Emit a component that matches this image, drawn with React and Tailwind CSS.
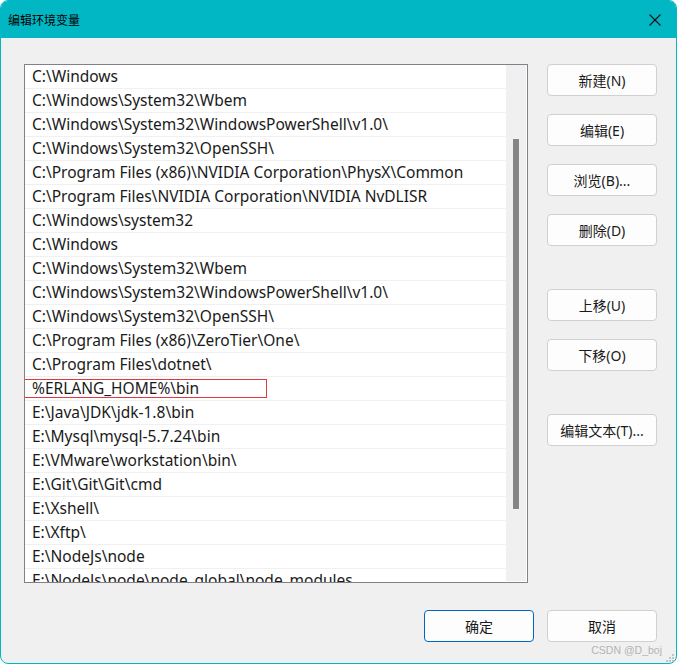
import React from 'react';

const paths = [
  'C:\\Windows',
  'C:\\Windows\\System32\\Wbem',
  'C:\\Windows\\System32\\WindowsPowerShell\\v1.0\\',
  'C:\\Windows\\System32\\OpenSSH\\',
  'C:\\Program Files (x86)\\NVIDIA Corporation\\PhysX\\Common',
  'C:\\Program Files\\NVIDIA Corporation\\NVIDIA NvDLISR',
  'C:\\Windows\\system32',
  'C:\\Windows',
  'C:\\Windows\\System32\\Wbem',
  'C:\\Windows\\System32\\WindowsPowerShell\\v1.0\\',
  'C:\\Windows\\System32\\OpenSSH\\',
  'C:\\Program Files (x86)\\ZeroTier\\One\\',
  'C:\\Program Files\\dotnet\\',
  '%ERLANG_HOME%\\bin',
  'E:\\Java\\JDK\\jdk-1.8\\bin',
  'E:\\Mysql\\mysql-5.7.24\\bin',
  'E:\\VMware\\workstation\\bin\\',
  'E:\\Git\\Git\\Git\\cmd',
  'E:\\Xshell\\',
  'E:\\Xftp\\',
  'E:\\NodeJs\\node',
  'E:\\NodeJs\\node\\node_global\\node_modules',
];

const uiFont = "font-['Noto_Sans','Noto_Sans_CJK_SC',sans-serif]";

// plain windows-style push button
const WinButton = ({ label, primary = false, className = '' }) => (
  <div
    className={`w-[110px] h-[32px] flex items-center justify-center rounded-[4px] bg-[#fdfdfd] text-[14px] text-[#1a1a1a] ${
      primary ? 'border border-[#0067c0]' : 'border border-[#d0d0d0]'
    } ${className}`}
  >
    {label}
  </div>
);

export default function App() {
  return (
    <div className="w-[677px] h-[664px] bg-white">
      <div className={`w-[677px] h-[664px] flex flex-col rounded-[8px] border border-[#00b7c3] bg-[#f0f0f0] overflow-hidden ${uiFont}`}>
        {/* Title bar */}
        <div className="h-[37px] shrink-0 bg-[#00b7c3] flex items-center justify-between pl-[7px] pr-[15px]">
          <span className="text-[12px] text-black leading-none pt-[2px]">编辑环境变量</span>
          <svg width="12" height="12" viewBox="0 0 12 12" className="mt-[1px]">
            <path d="M0.5 0.5L11.5 11.5M11.5 0.5L0.5 11.5" stroke="#111" strokeWidth="1.1" fill="none" />
          </svg>
        </div>

        {/* Body */}
        <div className="flex-1 flex flex-col pl-[23px] pt-[26px]">
          <div className="flex">
            {/* Path list */}
            <div className="relative w-[504px] h-[519px] border border-[#83808a] bg-white flex overflow-hidden">
              <div className="flex-1 flex flex-col">
                {paths.map((p, i) => (
                  <div
                    key={i}
                    className="h-[24px] shrink-0 border-b border-[#f0f0f0] flex items-center pl-[7px] pt-[1px] text-[15.5px] text-[#1a1a1a] whitespace-nowrap"
                  >
                    {p}
                  </div>
                ))}
              </div>
              <div className="w-[20px] shrink-0 bg-[#f0f0f0] mb-[1px] mr-[1px] flex justify-center pt-[74px]">
                <div className="w-[6px] h-[370px] bg-[#858585]" />
              </div>
              <div className="absolute left-[-3px] top-[314px] w-[245px] h-[19px] border border-[#e0393e]" />
            </div>

            {/* Side buttons */}
            <div className="ml-[19px] flex flex-col">
              <WinButton label="新建(N)" />
              <WinButton label="编辑(E)" className="mt-[18px]" />
              <WinButton label="浏览(B)..." className="mt-[18px]" />
              <WinButton label="删除(D)" className="mt-[18px]" />
              <WinButton label="上移(U)" className="mt-[43px]" />
              <WinButton label="下移(O)" className="mt-[18px]" />
              <WinButton label="编辑文本(T)..." className="mt-[43px]" />
            </div>
          </div>

          {/* Footer buttons */}
          <div className="flex justify-end gap-[13px] pr-[19px] mt-[27px]">
            <WinButton label="确定" primary />
            <WinButton label="取消" />
          </div>

          <div className="flex justify-end items-end mt-[3px]">
            <span className="text-[10.5px] text-[#b4b4b4] font-['Liberation_Sans',sans-serif] leading-none mr-[3px] mb-[8px]">
              CSDN @D_boj
            </span>
            <svg width="10" height="10" viewBox="0 0 10 10" className="mr-[1px] mb-[1px]">
              <rect x="7" y="1" width="2" height="2" fill="#c4c4c4" />
              <rect x="4" y="4" width="2" height="2" fill="#c4c4c4" />
              <rect x="7" y="4" width="2" height="2" fill="#c4c4c4" />
              <rect x="1" y="7" width="2" height="2" fill="#c4c4c4" />
              <rect x="4" y="7" width="2" height="2" fill="#c4c4c4" />
              <rect x="7" y="7" width="2" height="2" fill="#c4c4c4" />
            </svg>
          </div>
        </div>
      </div>
    </div>
  );
}
